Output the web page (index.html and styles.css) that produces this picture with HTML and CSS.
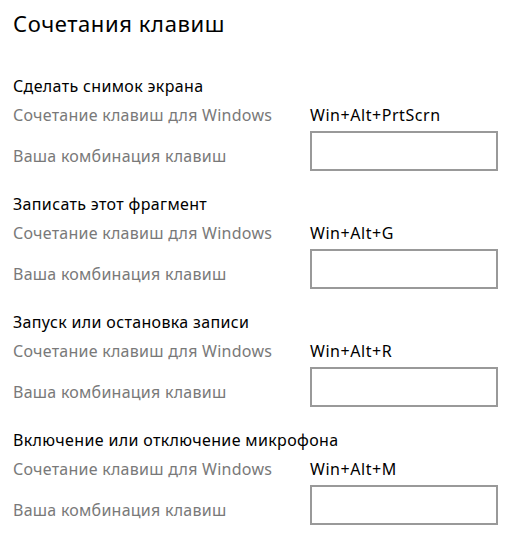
FILE: index.html
```html
<!DOCTYPE html>
<html lang="ru">
<head>
<meta charset="utf-8">
<link rel="stylesheet" href="styles.css">
</head>
<body>
<main class="page">
  <h1 class="title">Сочетания клавиш</h1>

  <section class="shortcut">
    <div class="shortcut-name">Сделать снимок экрана</div>
    <div class="label">Сочетание клавиш для Windows</div>
    <div class="value">Win+Alt+PrtScrn</div>
    <div class="label label-input">Ваша комбинация клавиш</div>
    <div class="keybox"></div>
  </section>

  <section class="shortcut">
    <div class="shortcut-name">Записать этот фрагмент</div>
    <div class="label">Сочетание клавиш для Windows</div>
    <div class="value">Win+Alt+G</div>
    <div class="label label-input">Ваша комбинация клавиш</div>
    <div class="keybox"></div>
  </section>

  <section class="shortcut">
    <div class="shortcut-name">Запуск или остановка записи</div>
    <div class="label">Сочетание клавиш для Windows</div>
    <div class="value">Win+Alt+R</div>
    <div class="label label-input">Ваша комбинация клавиш</div>
    <div class="keybox"></div>
  </section>

  <section class="shortcut">
    <div class="shortcut-name">Включение или отключение микрофона</div>
    <div class="label">Сочетание клавиш для Windows</div>
    <div class="value">Win+Alt+M</div>
    <div class="label label-input">Ваша комбинация клавиш</div>
    <div class="keybox"></div>
  </section>
</main>
</body>
</html>
```

FILE: styles.css
```css
html, body {
  margin: 0;
  background: #ffffff;
}

body {
  font-family: "Noto Sans", "Open Sans", sans-serif;
  color: #000000;
}

.page {
  padding: 9px 0 0 13px;
}

.title {
  margin: 0 0 39px;
  font-size: 22px;
  line-height: 28px;
  font-weight: 400;
  letter-spacing: 0.6px;
}

.shortcut {
  display: grid;
  grid-template-columns: 297px 188px;
  margin-bottom: 23px;
  font-size: 16px;
  line-height: 20px;
  letter-spacing: 0.25px;
}

.shortcut-name {
  grid-column: 1 / -1;
  margin-bottom: 9px;
  letter-spacing: 0.35px;
}

.label {
  color: #797979;
}

.value {
  letter-spacing: 0.55px;
}

.label-input {
  align-self: end;
  padding-bottom: 5px;
}

.keybox {
  margin-top: 6px;
  height: 40px;
  box-sizing: border-box;
  border: 2px solid #999999;
  background: #ffffff;
}
```
